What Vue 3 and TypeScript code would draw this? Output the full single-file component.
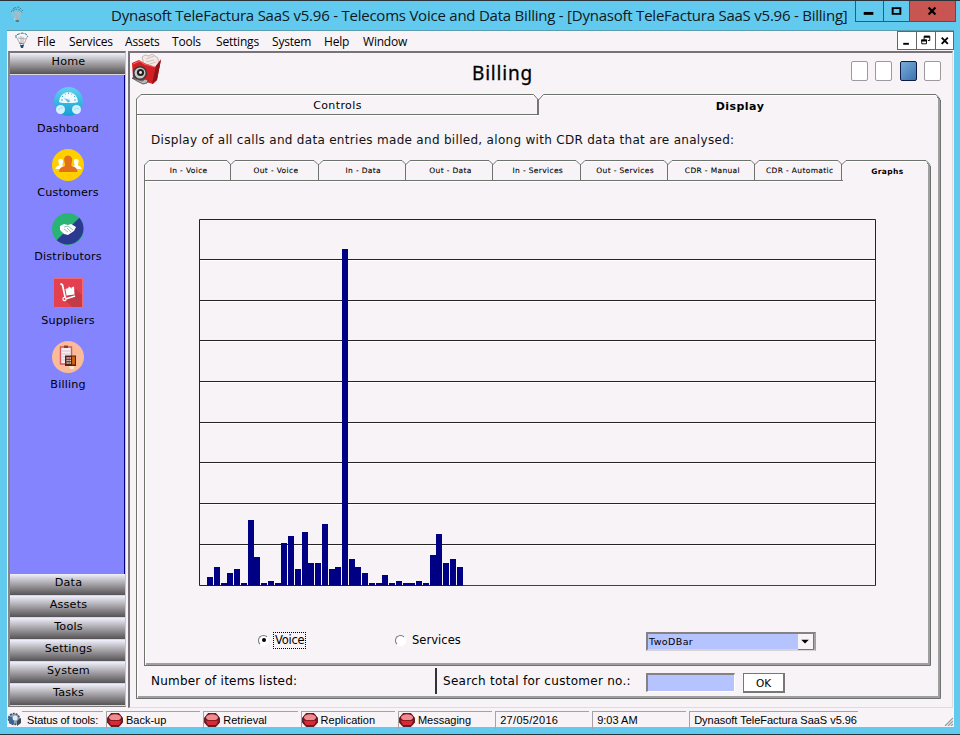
<script setup lang="ts">
import { ref } from 'vue'

const menus = ['File', 'Services', 'Assets', 'Tools', 'Settings', 'System', 'Help', 'Window']
const shortcuts = ['Dashboard', 'Customers', 'Distributors', 'Suppliers', 'Billing']
const groups = ['Data', 'Assets', 'Tools', 'Settings', 'System', 'Tasks']
const innerTabs = [
  'In - Voice', 'Out - Voice', 'In - Data', 'Out - Data', 'In - Services',
  'Out - Services', 'CDR - Manual', 'CDR - Automatic',
]
const tools = ['Back-up', 'Retrieval', 'Replication', 'Messaging']
const series = ref('Voice')

const bars: number[] = [
  9, 19, 3, 13, 17, 3, 66, 29, 3, 5, 3, 43, 50, 17, 54, 23, 23, 62, 17, 19,
  337, 27, 19, 13, 3, 3, 11, 3, 5, 3, 3, 5, 3, 31, 52, 23, 27, 19,
]
const gridLines = [40, 81, 121, 162, 203, 243, 284, 325]
const barX = (i: number) => Math.round(8.2 + i * 6.74)
</script>

<template>
  <div class="app-window">
    <header class="titlebar">
      <svg class="app-icon" viewBox="0 0 14 18">
        <path d="M1 6 4 2M4 2l5-1 4 4M3 5l3-2 4 1 2 3" stroke="#3c8c96" fill="none" stroke-dasharray="2 1" />
        <path d="M2 6l2 4 2 2M11 6l-2 5-1 2M6 5v6M8 6v5M4 7h6" stroke="#a8bcc4" fill="none" stroke-width="1.5" />
        <path d="M5 12h4v4H6z" fill="#5c7c84" /><path d="M4 13h5" stroke="#eee" />
      </svg>
      <h1>Dynasoft TeleFactura SaaS v5.96 - Telecoms Voice and Data Billing - [Dynasoft TeleFactura SaaS v5.96 - Billing]</h1>
      <div class="controls">
        <button class="min"><svg viewBox="0 0 28 20"><path d="M8 11h10v3H8z" /></svg></button>
        <button class="max"><svg viewBox="0 0 26 20"><path d="M9 7h8v6H9z" fill="none" stroke="#000" stroke-width="2" /></svg></button>
        <button class="close"><svg viewBox="0 0 46 20"><path d="M19 6.500l7 7M26 6.500l-7 7" stroke="#000" stroke-width="2.300" /></svg></button>
      </div>
    </header>

    <div class="client">
      <nav class="menubar">
        <svg class="menu-icon" viewBox="0 0 14 17">
          <path d="M1 6V3l3-1 3-1 4 1 2 3" stroke="#14848c" fill="none" stroke-dasharray="3 1" />
          <path d="M2 6l2 4 2 3M12 5l-2 5-2 3M6 4v7M8 5v6M3 6l8 1" stroke="#b0b0b4" fill="none" />
          <path d="M5 13h4l-1 3H6z" fill="#1c4c78" /><path d="M4 11l5 1" stroke="#777" />
        </svg>
        <span v-for="m in menus" :key="m" :class="['menu', 'menu-' + m.toLowerCase()]">{{ m }}</span>
        <div class="mdi">
          <button><svg viewBox="0 0 18 18"><path d="M5 11.500h6v2H5z" /></svg></button>
          <button><svg viewBox="0 0 18 18"><path d="M7 8V4.500h6V9h-2M4.500 8.500h5v4h-5z" fill="none" stroke="#000" /><path d="M7 4h6v2H7zM4 8h6v2H4z" /></svg></button>
          <button><svg viewBox="0 0 18 18"><path d="M5.500 6l6.500 6.500M12 6l-6.500 6.500" stroke="#000" stroke-width="2" /></svg></button>
        </div>
      </nav>

      <div class="workspace">
        <aside class="sidebar">
          <button class="group">Home</button>
          <ul class="shortcuts">
            <li v-for="s in shortcuts" :key="s">
              <svg v-if="s === 'Dashboard'" viewBox="0 0 32 32">
                <defs><linearGradient id="dash" x2="0" y2="1"><stop stop-color="#62d0f0" /><stop offset="1" stop-color="#14a0d4" /></linearGradient></defs>
                <circle cx="16.500" cy="16.500" r="14.500" fill="url(#dash)" />
                <path d="M7 17a9.500 10 0 1 1 19 0q-3 1-5 1H12q-3 0-5-1z" fill="#eef9fd" />
                <path d="M9 15h2M10 11l1 1M13 8.500l.5 1M16.500 7.500v1.500M20 8.500l-.5 1M23 11l-1 1M24 15h-2" stroke="#4bb0d4" />
                <path d="M12 13l4 1.500a1.500 1.500 0 1 1-1 2z" fill="#5cc0e0" />
                <circle cx="8.500" cy="24.500" r="4.500" fill="#d4f2fb" /><circle cx="24.500" cy="24.500" r="4.500" fill="#d4f2fb" />
                <path d="M6 25q2-3 5-2M22 25q2-3 5-1" stroke="#a0dcf0" fill="none" />
              </svg>
              <svg v-else-if="s === 'Customers'" viewBox="0 0 32 32">
                <circle cx="16" cy="16" r="16" fill="#ffcf00" />
                <path d="M3.500 20q0-3 3.500-3.500v-1.500q-2-5 1.500-5 4 0 2 5v1.500q3 .5 3.500 3.500zM19 20q0-3 3.500-3.500v-1.500q-2-5 1.500-5 4 0 2 5v1.500q3 .5 3.500 3.500z" fill="#fff" />
                <path d="M7 23q0-5 6-6v-2q-3-8 3-8.500 6 .5 3.500 8.500v2q6 1 6 6z" fill="#e2701a" />
              </svg>
              <svg v-else-if="s === 'Distributors'" viewBox="0 0 32 32">
                <circle cx="16" cy="16" r="16" fill="#29b473" />
                <path d="M27.300 4.700A16 16 0 0 1 4.700 27.300z" fill="#2b3990" />
                <path d="M8 13l4-2 4 1 3-1 5 3-2 4-6 4-4-1-4-4z" fill="#fff" />
                <path d="M12 14l4-1 5 4M12 16l4 3M15 15l4 4" stroke="#7faaa8" fill="none" stroke-width=".8" />
              </svg>
              <svg v-else-if="s === 'Suppliers'" viewBox="0 0 32 32">
                <path d="M1.500 1.500h29v29h-29z" fill="#e34150" stroke="#f06a78" />
                <path d="M24 12l6 6v12H20l-8-8z" fill="#c33a48" />
                <path d="M8.500 6.500l2 1.500 3 14 9.500-3" stroke="#fff" fill="none" stroke-width="1.700" />
                <path d="M13.500 12l3-1v-1.500l2 1 1 1.500v-1.500l2.500-1 .5 8-8 1z" fill="#fff" /><circle cx="12.500" cy="22" r="1.600" fill="#e34150" stroke="#fff" stroke-width="1.200" />
              </svg>
              <svg v-else viewBox="0 0 32 32">
                <circle cx="16" cy="16" r="16" fill="#f9bb98" />
                <path d="M8.500 6h11v17h-11z" fill="#f7eef0" stroke="#dc5460" stroke-width="1.400" />
                <path d="M12 4.500h4v2.500h-4z" fill="#8c4020" /><path d="M10 10h8M10 13h8M10 16h4M10 19h3" stroke="#d0c4cc" />
                <path d="M13 14.500h11v10.500H13z" fill="#552018" /><path d="M20 15.500h3v8h-3z" fill="#d06010" />
                <path d="M14.500 17h4.500M14.500 19.500h4.500M14.500 22h4.500" stroke="#f4e0d0" stroke-width="1.500" stroke-dasharray="1.300 .5" /><path d="M17 25h5v3h-4z" fill="#fbe6cf" />
              </svg>
              <span>{{ s }}</span>
            </li>
          </ul>
          <div class="groups"><button v-for="g in groups" :key="g" class="group">{{ g }}</button></div>
        </aside>

        <main class="main">
          <div class="heading">
            <svg class="camera" viewBox="0 0 31 31">
              <path d="M11 3l3-2 4 1 3-2 6 4 1 10-13 5z" fill="#f2e8e6" stroke="#b0a0a0" stroke-width=".7" />
              <path d="M15 5l8-3M15 8l8-2M16 11l9-3" stroke="#d0c0c0" />
              <path d="M1 9l7-3 5 3 11 4 6-8-4 21-4 4-20-6z" fill="#d21f24" />
              <path d="M25 12l5-6-4 20-5 4z" fill="#8e1418" /><path d="M2 10l7-3 4 3 11 3" fill="none" stroke="#f3686a" />
              <circle cx="9" cy="19" r="7" fill="#3a3a3c" /><circle cx="9" cy="19" r="5.500" fill="#c8c8c8" /><circle cx="9.500" cy="18.500" r="3.600" fill="#222" /><circle cx="9.500" cy="18.500" r="1.400" fill="#eee" />
              <path d="M1 24l5 3 6 3 4-1 1-3-3-1-3 2z" fill="#b8b8b8" stroke="#444" stroke-width=".8" />
            </svg>
            <h2>Billing</h2>
            <div class="leds"><i></i><i></i><i class="on"></i><i></i></div>
          </div>

          <section class="outer">
            <svg class="frame" viewBox="0 0 805 605">
              <path d="M1.500 603V6L7 1.500H398L402.500 6" fill="none" stroke="#fff" />
              <path d="M.5 604V5L5 .5H397.500L401.500 5" class="edge" />
              <path d="M402 5v16" stroke="#777" stroke-width="2" /><path d="M0 20.500H403" class="edge" />
              <path d="M1 21.500H403M404 6l5-4.500h391" stroke="#fff" fill="none" />
              <path d="M402.500 6L407.500 .5H800L804 5" class="edge" />
              <path d="M803 5v598H2" fill="none" stroke="#a09ea0" stroke-width="2" />
              <path d="M801 3l3.500 3V604.500H0" class="edge" />
            </svg>
            <div class="outer-content">
              <div class="outer-tabs"><span>Controls</span><b>Display</b></div>
              <p class="intro">Display of all calls and data entries made and billed, along with CDR data that are analysed:</p>
              <div class="inner">
                <svg class="frame" viewBox="0 0 787 506">
                  <path d="M1.500 504V5L6 1.500H83" stroke="#fff" fill="none" />
                  <path d="M.5 505V5L5 .5H83L87 5" class="edge" />
                  <g v-for="n in 8" :key="n">
                    <path :d="`M${Math.round(n * 87.3) - 1}.5 4v17M${Math.round(n * 87.3)} 4.5l4-4h${n === 8 ? 80 : 79}l4 4`" class="edge" />
                    <path :d="`M${Math.round(n * 87.3) + 1} 5.500l4-4h77`" stroke="#fff" fill="none" />
                  </g>
                  <path d="M0 20.500H699" class="edge" /><path d="M1 21.500H699" stroke="#fff" />
                  <path d="M785 5v499H2" stroke="#a09ea0" stroke-width="2" fill="none" />
                  <path d="M783 3l3.500 3V505.500H0" class="edge" />
                </svg>
                <div class="inner-content">
                  <div class="inner-tabs"><span v-for="t in innerTabs" :key="t">{{ t }}</span><b>Graphs</b></div>
                  <svg class="chart" viewBox="0 0 677 367">
                    <path v-for="y in gridLines" :key="y" :d="`M0 ${y + 1.5}H676`" stroke="#fff" />
                    <path v-for="y in gridLines" :key="'g' + y" :d="`M0 ${y + .5}H676`" stroke="#242424" />
                    <path d="M.5 .5H676.500V366.500H.5z" fill="none" stroke="#242424" />
                    <path d="M264 366.500h412" stroke="#34349c" />
                    <rect v-for="(h, i) in bars" :key="i" :x="barX(i)" :y="367 - h" :width="6" :height="h - .5" fill="#000084" />
                  </svg>
                  <div class="options">
                    <label class="radio voice" @click="series = 'Voice'"><i :class="{ checked: series === 'Voice' }"></i><span>Voice</span></label>
                    <label class="radio services" @click="series = 'Services'"><i :class="{ checked: series === 'Services' }"></i><span>Services</span></label>
                    <div class="select"><span>TwoDBar</span><button><svg viewBox="0 0 15 16"><path d="M3 6h8l-4 4z" /></svg></button></div>
                  </div>
                </div>
              </div>
              <div class="search">
                <span class="count">Number of items listed:</span>
                <span class="query">Search total for customer no.:</span>
                <span class="field"></span>
                <button class="ok">OK</button>
              </div>
            </div>
          </section>
        </main>
      </div>

      <footer class="status">
        <svg class="gear" viewBox="0 0 15 15"><circle cx="7" cy="7" r="5.500" fill="#8fa0b4" stroke="#445264" stroke-width="1.500" stroke-dasharray="2 1" /><path d="M1 5h6v7H3z" fill="#3465a0" /><circle cx="8" cy="6" r="2.500" fill="#e2eaf2" /><path d="M10 9l4-3v5l-4 3z" fill="#3c4654" /></svg>
        <span class="cell first">Status of tools:</span>
        <span v-for="t in tools" :key="t" class="cell tool">
          <svg viewBox="0 0 16 14"><path d="M4 .5h8L15.500 5v4.500L12 13.500H4L.5 9.500V5z" fill="#7c1018" stroke="#401014" stroke-width=".8" /><ellipse cx="8" cy="4.500" rx="6" ry="3.300" fill="#ee8c92" /><path d="M1.500 7.500h13l-2.500 4.500H4z" fill="#dc2834" /><path d="M1 7.500h14" stroke="#8c1820" /></svg>{{ t }}
        </span>
        <span class="cell date">27/05/2016</span><span class="cell time">9:03 AM</span><span class="cell product">Dynasoft TeleFactura SaaS v5.96</span>
        <svg class="grip" viewBox="0 0 9 9"><path d="M1 9l8-8M4 9l5-5M7 9l2-2" stroke="#999" stroke-width="1.200" /></svg>
      </footer>
    </div>
  </div>
</template>

<style>
body { margin: 0; overflow: hidden; }
</style>

<style scoped>
* { box-sizing: border-box; margin: 0; padding: 0; }
button { border: 0; background: none; color: #000; font: inherit; display: block; }
svg { display: block; flex: none; }
.app-window { width: 960px; height: 735px; background: #63caef; border-top: 1px solid #2b3238; border-bottom: 1px solid #2b3238; font-family: "DejaVu Sans", sans-serif; color: #000; overflow: hidden; white-space: nowrap; }
.titlebar { height: 29px; display: flex; align-items: flex-start; }
.app-icon { width: 14px; height: 18px; margin: 5px 0 0 10px; }
h1 { font: 400 15px/20px "Open Sans", sans-serif; margin: 4px 0 0 87px; width: 744px; color: #101820; letter-spacing: -.23px; }
.controls { display: flex; height: 21px; border: 1px solid #315d6b; border-top: 0; width: 101px; }
.controls button { border-right: 1px solid #315d6b; }
.controls svg { height: 20px; }
.min svg { width: 27px; } .max svg { width: 25px; }
.controls .close { background: #c85552; border: 0; }
.close svg { width: 45px; }
.client { margin: 0 6px 0 7px; width: 947px; height: 697px; background: #f7f3f7; display: flex; flex-direction: column; border-top: 1px solid #5c9cac; }
.menubar { height: 20px; display: flex; flex: none; font: 12px/21px "Open Sans", sans-serif; letter-spacing: -.2px; padding-left: 8px; }
.menu-icon { width: 14px; height: 17px; margin: 1px 8px 0 0; }
.menu { flex: none; }
.menu-file { width: 32px; } .menu-services { width: 56px; } .menu-assets { width: 47px; } .menu-tools { width: 44px; } .menu-settings { width: 56px; } .menu-system { width: 52px; } .menu-help { width: 39px; }
.mdi { margin-left: auto; display: flex; background: #fff; border: 1px solid #666; width: 57px; height: 19px; }
.mdi button { width: 19px; border-right: 1px solid #666; } .mdi button:last-child { border: 0; }
.mdi svg { width: 18px; height: 17px; }
.workspace { display: flex; height: 657px; flex: none; margin-left: 1px; gap: 2px; }
.sidebar { width: 118px; height: 656px; border: 2px solid #84848a; border-right: 1px solid #c8c4c8; border-bottom: 1px solid #777; border-top-color: #777379; display: flex; flex-direction: column; }
.group { width: 115px; height: 22px; flex: none; border-bottom: 1px solid #dcd8dc; background: linear-gradient(#eff0fc, #aaa8ac 45%, #555355); font-size: 11.200px; line-height: 18px; padding-bottom: 3px; text-align: center; letter-spacing: .2px; padding-left: 2px; }
.shortcuts { list-style: none; flex: 1; background: #8484ff; border-right: 1px solid #000084; width: 115px; padding-top: 10px; }
.shortcuts li { height: 64px; display: flex; flex-direction: column; align-items: center; font-size: 11.200px; letter-spacing: .15px; line-height: 16px; padding-left: 2px; }
.shortcuts svg { width: 32px; height: 32px; margin-bottom: 4px; }
.groups { height: 132px; }
.main { width: 825px; height: 657px; border: 2px solid #777379; border-right: 1px solid #dedae0; border-bottom: 1px solid #dedae0; }
.heading { display: flex; height: 41px; }
.camera { width: 31px; height: 31px; margin: 1px 0 0 1px; }
h2 { font: 400 19px/28px "Noto Sans", sans-serif; letter-spacing: .8px; margin: 6px 0 0 310px; width: 379px; -webkit-text-stroke: .3px #000; }
.leds { display: flex; gap: 7.400px; padding-top: 8px; }
.leds i { width: 17px; height: 20px; border: 1px solid #9c9a9c; border-radius: 2px; background: #fff; }
.leds .on { border-color: #101c44; background: linear-gradient(135deg, #78acd8, #3c74b0); }
.outer { display: grid; width: 805px; height: 605px; margin-left: 6px; }
.frame, .outer-content, .inner-content { grid-area: 1 / 1; }
.outer > .frame { width: 805px; height: 605px; }
.edge { fill: none; stroke: #6e736e; }
.outer-tabs { display: grid; grid-template-columns: 403px 402px; height: 21px; text-align: center; font-size: 11px; line-height: 23px; letter-spacing: .4px; }
.outer-tabs b { line-height: 26px; letter-spacing: .45px; }
.intro { font-size: 12px; line-height: 18px; margin: 16px 0 11px 15px; letter-spacing: .3px; color: #111; }
.inner { display: grid; width: 787px; height: 506px; margin-left: 8px; }
.inner > .frame { width: 787px; height: 506px; }
.inner-tabs { display: grid; grid-template-columns: repeat(8, 87.300px) 88px; height: 21px; font-size: 7.500px; line-height: 21px; text-align: center; letter-spacing: .35px; padding-left: 1px; -webkit-text-stroke: .1px #000; }
.inner-tabs b { line-height: 23px; -webkit-text-stroke: 0; }
.chart { width: 677px; height: 367px; margin: 38px 0 0 55px; }
.options { display: flex; height: 24px; margin-top: 42px; align-items: center; font-size: 11.500px; }
.radio { display: flex; align-items: center; gap: 6px; letter-spacing: .05px; }
.radio i { width: 11px; height: 11px; border-radius: 50%; border: 1.500px solid; border-color: #777 #fff #fff #777; background: #fff; display: grid; place-items: center; }
.checked::after { content: ""; width: 4px; height: 4px; border-radius: 50%; background: #000; }
.voice { margin-left: 114px; width: 137px; gap: 5px; letter-spacing: -.25px; }
.voice span { outline: 1px dotted #000; line-height: 15px; padding: 0 1px; }
.services.radio { width: 251px; }
.select { width: 170px; height: 19px; border: 2px solid #848284; border-right-color: #a5a2a5; border-bottom-color: #d8d4d8; background: #b5c3ff; display: flex; justify-content: space-between; font-size: 9.500px; line-height: 16px; letter-spacing: .4px; padding-left: 1px; margin-top: 2px; }
.select button { width: 16px; height: 16px; background: #f7f3f7; border-right: 1px solid #777; border-bottom: 1px solid #777; }
.select svg { width: 15px; height: 15px; }
.search { display: flex; height: 28px; align-items: center; margin-top: 1px; font-size: 12px; }
.count { margin-left: 15px; width: 284px; letter-spacing: .22px; }
.query { border-left: 2px solid #333; height: 26px; line-height: 27px; padding-left: 6px; width: 211px; letter-spacing: .28px; }
.field { width: 89px; height: 19px; background: #b5c3ff; border: 2px solid #848284; border-right: 1px solid #fff; border-bottom: 1px solid #fff; margin-top: 2px; }
.ok { width: 42px; height: 20px; margin: 3px 0 0 8px; border: 1px solid #777; border-right-width: 2px; border-bottom-width: 2px; background: #fff; font-size: 10.500px; line-height: 19px; }
.status { height: 18px; display: flex; font: 11px/18px "Liberation Sans", sans-serif; margin-top: auto; }
.gear { width: 15px; height: 15px; margin-top: 3px; }
.cell { border-top: 1px solid #a5a2a5; border-left: 1px solid #a5a2a5; height: 18px; margin-top: 2px; padding-left: 4px; margin-right: 3px; overflow: hidden; flex: none; line-height: 17px; }
.cell.first { border-left: 0; width: 81px; letter-spacing: -.1px; padding-left: 5px; }
.tool { width: 94.300px; display: flex; gap: 3px; padding-left: 0; }
.tool svg { width: 16px; height: 14px; margin-top: 1px; }
.date { width: 94px; letter-spacing: .3px; } .time { width: 94px; } .product { width: 169px; letter-spacing: -.03px; }
.grip { width: 9px; height: 9px; margin: 8px 1px 0 auto; }
</style>
